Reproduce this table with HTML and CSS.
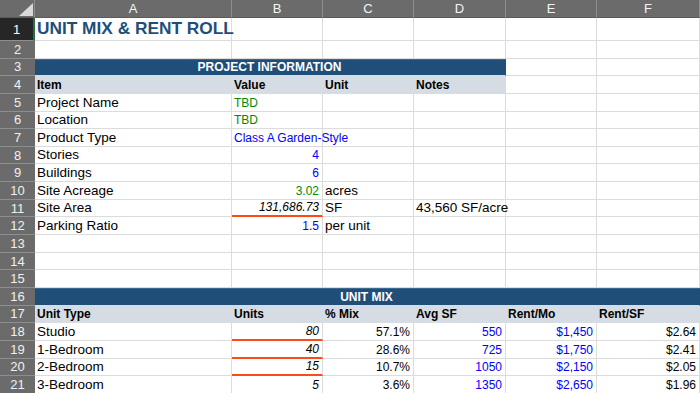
FILE: index.html
```html
<!DOCTYPE html>
<html lang="en">
<head>
  <meta charset="UTF-8" />
  <title>Unit Mix &amp; Rent Roll</title>
  <link rel="stylesheet" href="styles.css">
</head>
<body>
  <table class="sheet">
    <colgroup>
      <col class="c-rh"><col class="c-a"><col class="c-b"><col class="c-c"><col class="c-d"><col class="c-e"><col class="c-f">
    </colgroup>

    <!-- column letters -->
    <tr class="col-heads">
      <th class="corner">
        <svg width="14" height="13" viewBox="0 0 14 13"><polygon points="14,0 14,13 0,13" fill="#d9d9d9"/></svg>
      </th>
      <th>A</th><th>B</th><th>C</th><th>D</th><th>E</th><th>F</th>
    </tr>

    <tr class="r-title">
      <th class="rh active">1</th>
      <td class="title">UNIT MIX &amp; RENT ROLL</td><td></td><td></td><td></td><td></td><td></td>
    </tr>
    <tr>
      <th class="rh">2</th>
      <td></td><td></td><td></td><td></td><td></td><td></td>
    </tr>

    <!-- project information -->
    <tr>
      <th class="rh">3</th>
      <td class="band" colspan="4">PROJECT INFORMATION</td><td></td><td></td>
    </tr>
    <tr>
      <th class="rh">4</th>
      <td class="hd">Item</td><td class="hd">Value</td><td class="hd">Unit</td><td class="hd">Notes</td><td></td><td></td>
    </tr>
    <tr>
      <th class="rh">5</th>
      <td class="lbl">Project Name</td><td class="val green">TBD</td><td></td><td></td><td></td><td></td>
    </tr>
    <tr>
      <th class="rh">6</th>
      <td class="lbl">Location</td><td class="val green">TBD</td><td></td><td></td><td></td><td></td>
    </tr>
    <tr>
      <th class="rh">7</th>
      <td class="lbl">Product Type</td><td class="val blue">Class A Garden-Style</td><td></td><td></td><td></td><td></td>
    </tr>
    <tr>
      <th class="rh">8</th>
      <td class="lbl">Stories</td><td class="num blue">4</td><td></td><td></td><td></td><td></td>
    </tr>
    <tr>
      <th class="rh">9</th>
      <td class="lbl">Buildings</td><td class="num blue">6</td><td></td><td></td><td></td><td></td>
    </tr>
    <tr>
      <th class="rh">10</th>
      <td class="lbl">Site Acreage</td><td class="num green">3.02</td><td class="lbl">acres</td><td></td><td></td><td></td>
    </tr>
    <tr>
      <th class="rh">11</th>
      <td class="lbl">Site Area</td><td class="num calc flag">131,686.73</td><td class="lbl">SF</td><td class="lbl">43,560 SF/acre</td><td></td><td></td>
    </tr>
    <tr>
      <th class="rh">12</th>
      <td class="lbl">Parking Ratio</td><td class="num blue">1.5</td><td class="lbl">per unit</td><td></td><td></td><td></td>
    </tr>
    <tr>
      <th class="rh">13</th>
      <td></td><td></td><td></td><td></td><td></td><td></td>
    </tr>
    <tr>
      <th class="rh">14</th>
      <td></td><td></td><td></td><td></td><td></td><td></td>
    </tr>
    <tr>
      <th class="rh">15</th>
      <td></td><td></td><td></td><td></td><td></td><td></td>
    </tr>

    <!-- unit mix -->
    <tr>
      <th class="rh">16</th>
      <td class="band" colspan="6">UNIT MIX</td>
    </tr>
    <tr>
      <th class="rh">17</th>
      <td class="hd">Unit Type</td><td class="hd">Units</td><td class="hd">% Mix</td><td class="hd">Avg SF</td><td class="hd">Rent/Mo</td><td class="hd">Rent/SF</td>
    </tr>
    <tr>
      <th class="rh">18</th>
      <td class="lbl">Studio</td><td class="num calc flag">80</td><td class="num">57.1%</td><td class="num blue">550</td><td class="num blue">$1,450</td><td class="num">$2.64</td>
    </tr>
    <tr>
      <th class="rh">19</th>
      <td class="lbl">1-Bedroom</td><td class="num calc flag">40</td><td class="num">28.6%</td><td class="num blue">725</td><td class="num blue">$1,750</td><td class="num">$2.41</td>
    </tr>
    <tr>
      <th class="rh">20</th>
      <td class="lbl">2-Bedroom</td><td class="num calc flag">15</td><td class="num">10.7%</td><td class="num blue">1050</td><td class="num blue">$2,150</td><td class="num">$2.05</td>
    </tr>
    <tr>
      <th class="rh">21</th>
      <td class="lbl">3-Bedroom</td><td class="num calc">5</td><td class="num">3.6%</td><td class="num blue">1350</td><td class="num blue">$2,650</td><td class="num">$1.96</td>
    </tr>
  </table>
</body>
</html>
```

FILE: styles.css
```css
html, body {
  margin: 0;
  padding: 0;
  background: #ffffff;
  overflow: hidden;
}

body {
  font-family: 'Liberation Sans', Arial, sans-serif;
  color: #000000;
}

.sheet {
  table-layout: fixed;
  border-collapse: separate;
  border-spacing: 0;
  width: 700px;
}

.c-rh { width: 35px; }
.c-a  { width: 197px; }
.c-b  { width: 91px; }
.c-c  { width: 91px; }
.c-d  { width: 92px; }
.c-e  { width: 91px; }
.c-f  { width: 103px; }

.sheet tr {
  height: 17.65px;
}

.sheet td {
  padding: 0 3px 1px 2px;
  border-right: 1px solid #dcdcdc;
  border-bottom: 1px solid #dcdcdc;
  white-space: nowrap;
  vertical-align: bottom;
  font-size: 12px;
  line-height: 14px;
}

/* sheet chrome */
.col-heads {
  height: 18px !important;
}

.col-heads th {
  background: #6b6b6b;
  color: #f4f4f4;
  font-weight: normal;
  font-size: 13px;
  padding: 0;
  border-right: 1px solid #8e8e8e;
  border-bottom: 1px solid #5a5a5a;
}

.col-heads .corner {
  text-align: right;
  vertical-align: bottom;
  padding: 0 1px 1px 0;
  line-height: 0;
}

.rh {
  background: #6b6b6b;
  color: #f0f0f0;
  font-weight: normal;
  font-size: 13px;
  padding: 0;
  border-bottom: 1px solid #8e8e8e;
  text-align: center;
}

.rh.active {
  background: #262626;
  color: #ffffff;
  border-right: 2px solid #217346;
}

.r-title {
  height: 22px !important;
}

/* cell types */
.title {
  color: #1f4e79;
  font-weight: bold;
  font-size: 17.3px !important;
  line-height: 20px !important;
  padding-bottom: 2px !important;
}

.band {
  background: #1f4e79;
  color: #ffffff;
  font-weight: bold;
  text-align: center;
  border-right-color: #1f4e79 !important;
  border-top: 1px solid #3d6890;
}

.hd {
  background: #d6dce4;
  font-weight: bold;
  border-right-color: #d6dce4 !important;
  border-bottom-color: #d6dce4 !important;
}

.lbl {
  font-size: 13.5px !important;
  line-height: 15px !important;
}

.val {
  text-align: left;
}

.num {
  text-align: right;
}

.calc {
  font-style: italic;
}

.flag {
  border-bottom: 2px solid #fc4a1a !important;
}

.green { color: #008a00; }
.blue  { color: #0000ff; }
```
